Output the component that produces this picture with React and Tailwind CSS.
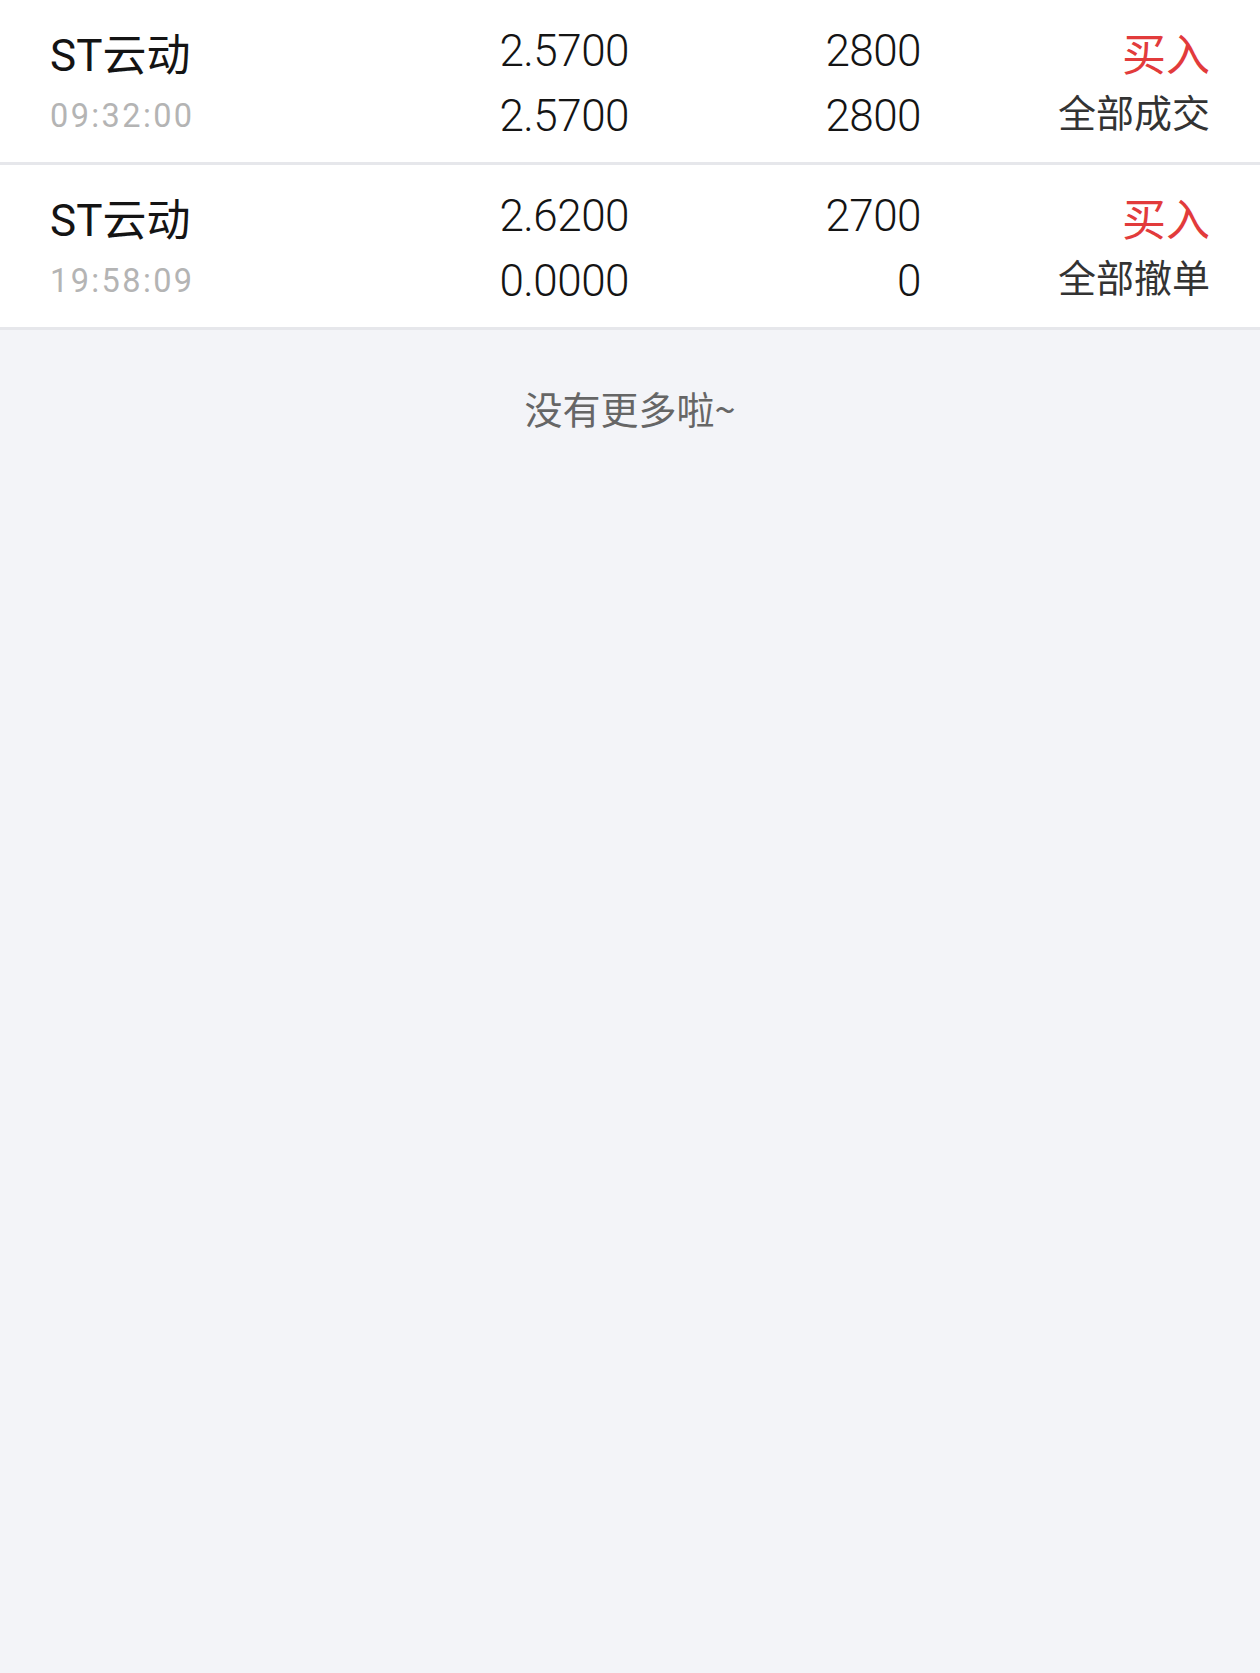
const ORDERS = [
  {
    name: "ST云动",
    time: "09:32:00",
    price: "2.5700",
    dealPrice: "2.5700",
    qty: "2800",
    dealQty: "2800",
    side: "买入",
    status: "全部成交",
  },
  {
    name: "ST云动",
    time: "19:58:09",
    price: "2.6200",
    dealPrice: "0.0000",
    qty: "2700",
    dealQty: "0",
    side: "买入",
    status: "全部撤单",
  },
];

const NUM_FONT = "font-['Roboto','Noto_Sans_CJK_SC',sans-serif]";
const CJK_FONT = "font-['Noto_Sans_CJK_SC',sans-serif]";

function OrderRow({ order }) {
  return (
    <div className="grid h-[165px] grid-cols-[330px_249px_292px_1fr] border-b-[3px] border-[#e6e7eb] bg-white px-[50px]">
      {/* name + time */}
      <div className="flex flex-col pt-[28px]">
        <span className={`${NUM_FONT} text-[44px] leading-[56px] text-[#141414]`}>
          {order.name}
        </span>
        <span className={`${NUM_FONT} mt-[12px] text-[32.5px] leading-[40px] tracking-[2.4px] text-[#b4b4b4]`}>
          {order.time}
        </span>
      </div>

      {/* price */}
      <div className={`${NUM_FONT} flex flex-col items-end pt-[23px] text-[44px] font-light leading-[56px] tracking-[-0.5px] text-[#141414]`}>
        <span>{order.price}</span>
        <span className="mt-[9px]">{order.dealPrice}</span>
      </div>

      {/* quantity */}
      <div className={`${NUM_FONT} flex flex-col items-end pt-[23px] text-[44px] font-light leading-[56px] tracking-[-0.5px] text-[#141414]`}>
        <span>{order.qty}</span>
        <span className="mt-[9px]">{order.dealQty}</span>
      </div>

      {/* side + status */}
      <div className={`${CJK_FONT} flex flex-col items-end pt-[24px]`}>
        <span className="text-[44px] leading-[56px] text-[#e23b3b]">{order.side}</span>
        <span className="mt-[6px] text-[38px] leading-[50px] text-[#333333]">{order.status}</span>
      </div>
    </div>
  );
}

export default function App() {
  return (
    <div className="min-h-[1673px] w-full bg-[#f3f4f8]">
      {ORDERS.map((o, i) => (
        <OrderRow key={i} order={o} />
      ))}
      <div className={`${CJK_FONT} pt-[53px] text-center text-[38px] leading-[50px] text-[#666666]`}>
        没有更多啦~
      </div>
    </div>
  );
}
